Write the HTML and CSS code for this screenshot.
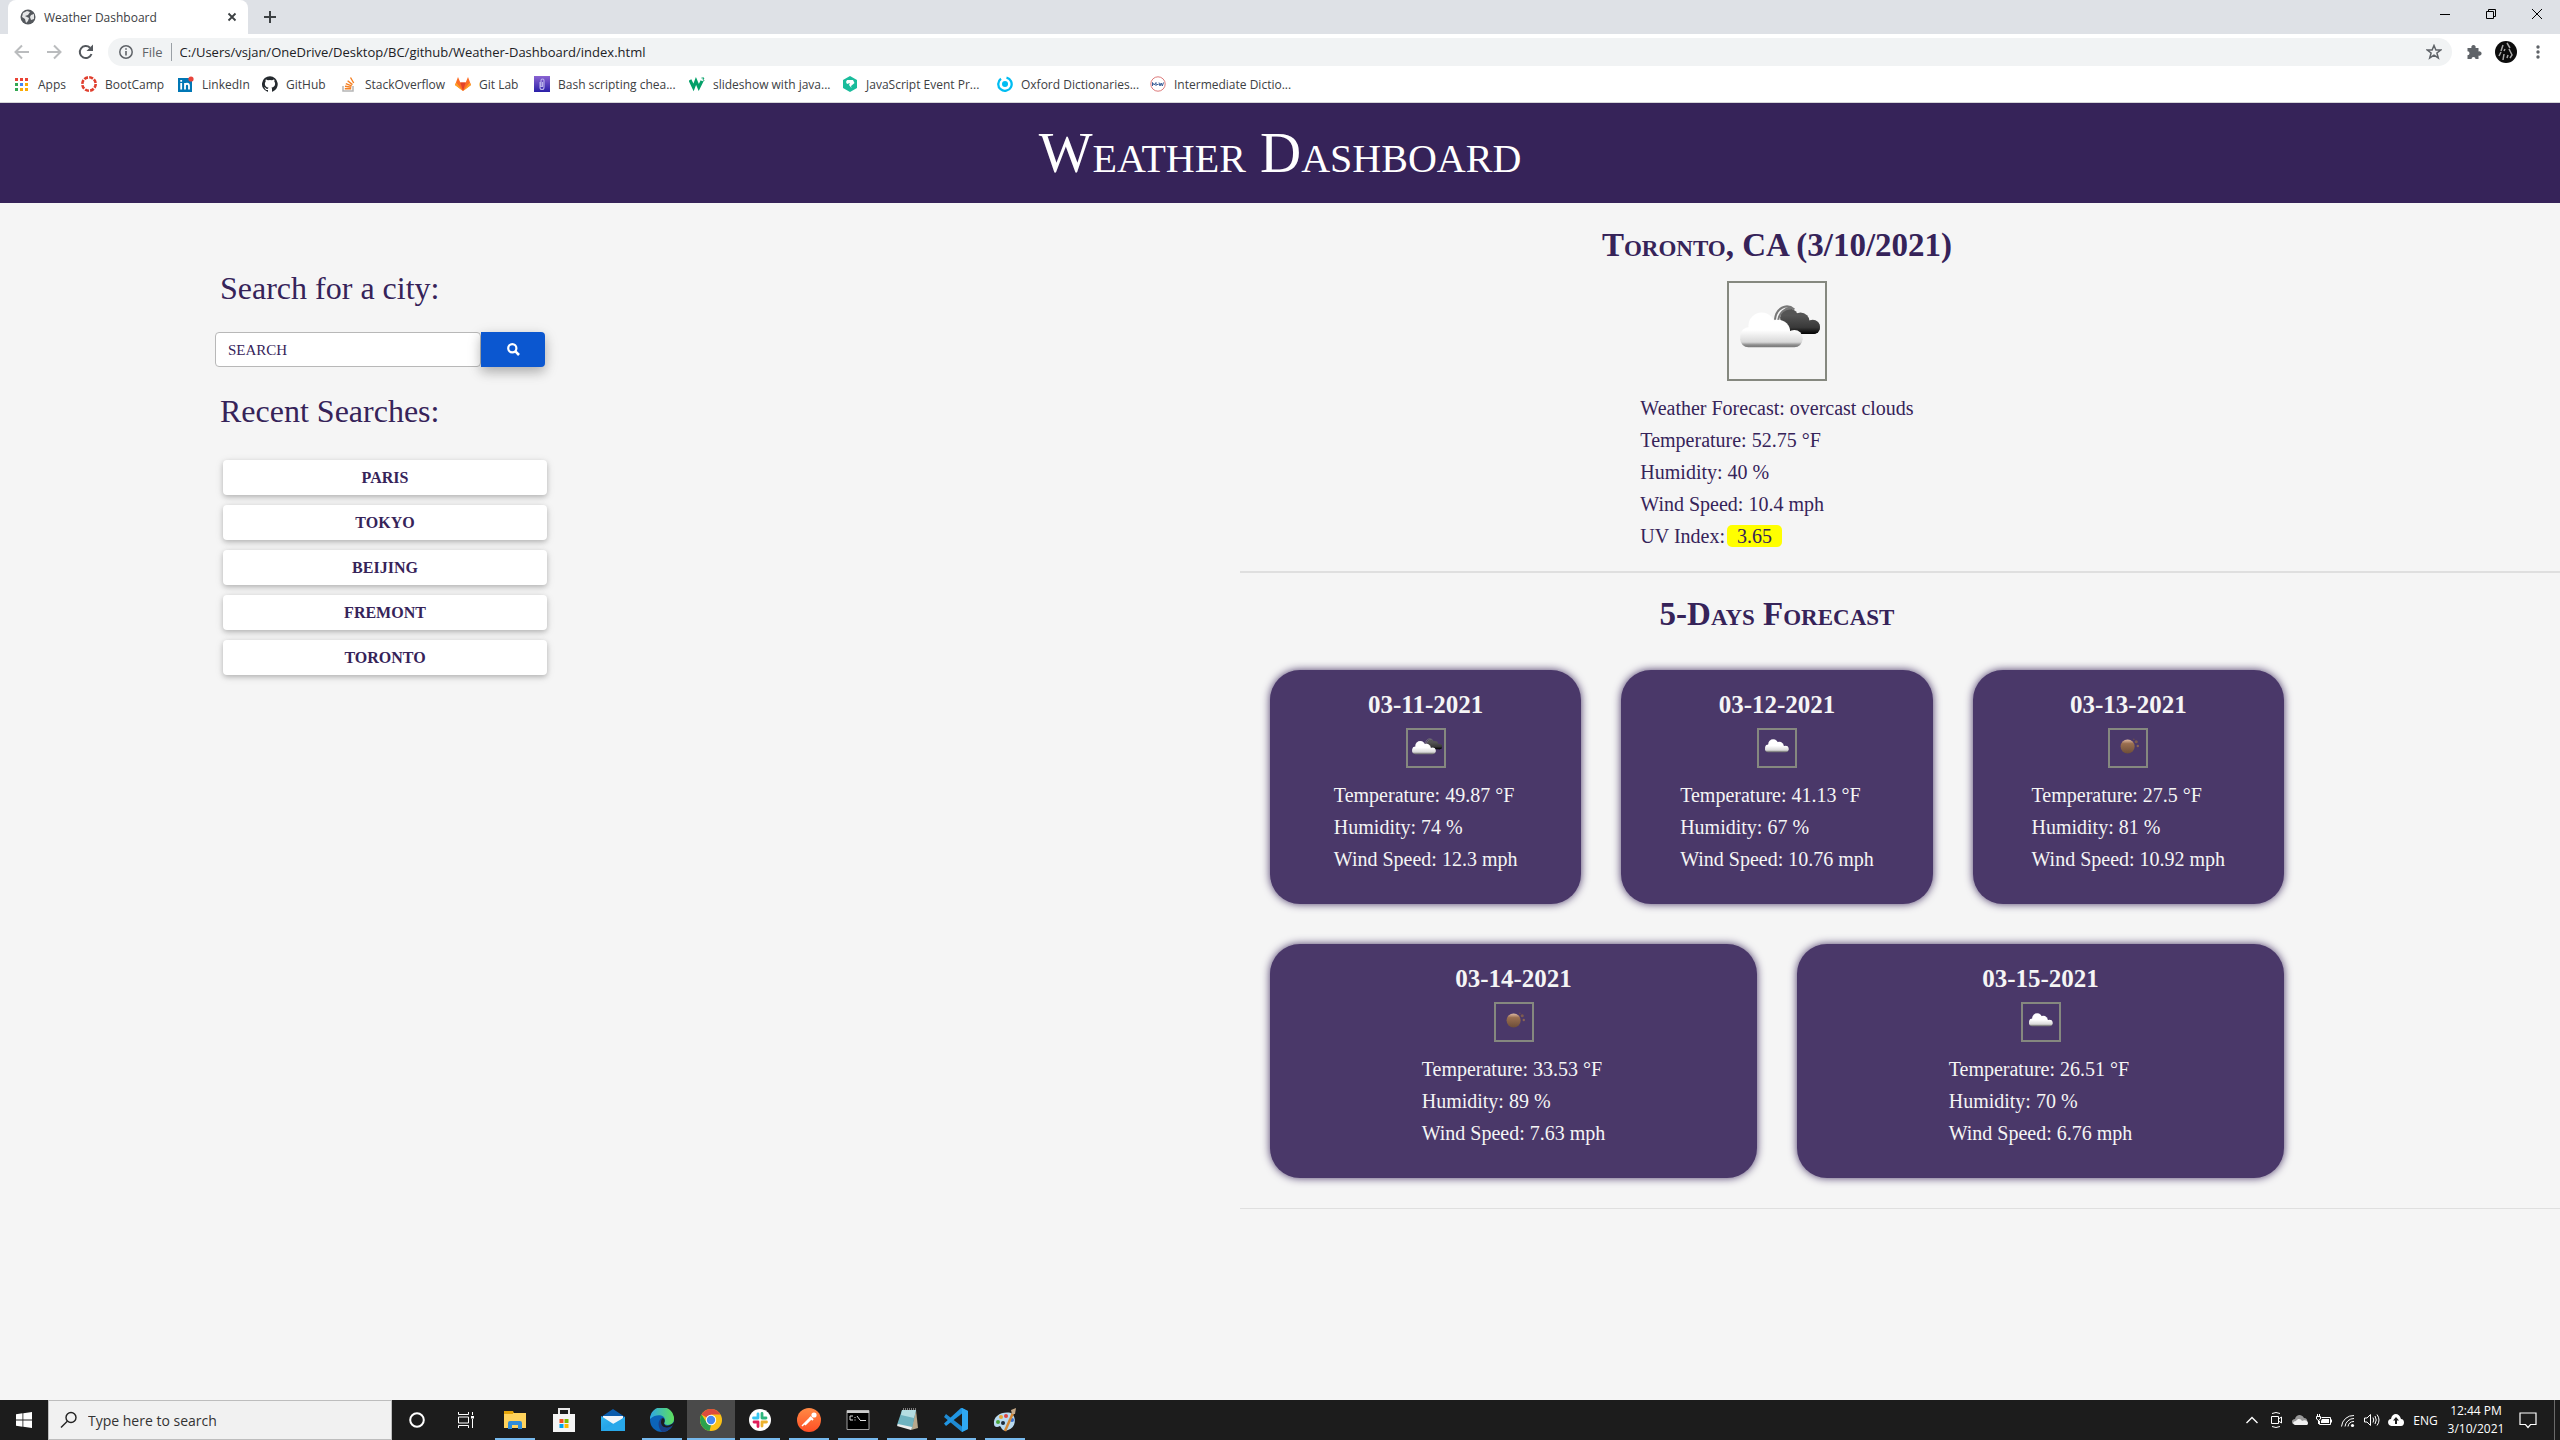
FILE: index.html
```html
<!DOCTYPE html>
<html lang="en">
<head>
<meta charset="utf-8">
<title>Weather Dashboard</title>
<link rel="stylesheet" href="styles.css">
</head>
<body>
<svg class="defs" aria-hidden="true">
  <defs>
    <linearGradient id="g-cloud" gradientUnits="userSpaceOnUse" x1="0" y1="32" x2="0" y2="66"><stop offset=".5" stop-color="#fff"/><stop offset=".85" stop-color="#d8d8d8"/><stop offset=".93" stop-color="#8c8c8c"/><stop offset="1" stop-color="#777"/></linearGradient>
    <linearGradient id="g-dark" gradientUnits="userSpaceOnUse" x1="0" y1="27" x2="0" y2="53"><stop offset=".3" stop-color="#555"/><stop offset=".75" stop-color="#383838"/><stop offset="1" stop-color="#000"/></linearGradient>
    <linearGradient id="g-sun" x1="0" y1="0" x2="0" y2="1"><stop offset="0" stop-color="#e2bda6"/><stop offset=".3" stop-color="#9a6f50"/><stop offset="1" stop-color="#6d4d38"/></linearGradient>
    <linearGradient id="g-edge" x1="0" y1="0" x2="1" y2="0"><stop offset="0" stop-color="#2ea8e6"/><stop offset="1" stop-color="#5fe05a"/></linearGradient>
    <linearGradient id="g-bash" x1="0" y1="0" x2="0" y2="1"><stop offset="0" stop-color="#8a63d2"/><stop offset="1" stop-color="#2a1fa8"/></linearGradient>
    <linearGradient id="g-mail" x1="0" y1="0" x2="1" y2="1"><stop offset="0" stop-color="#35b8f1"/><stop offset="1" stop-color="#1590df"/></linearGradient>
    <linearGradient id="g-post" x1="0" y1="0" x2="0" y2="1"><stop offset="0" stop-color="#ff8a45"/><stop offset="1" stop-color="#ff4f25"/></linearGradient>
    <g id="white-cloud" fill="url(#g-cloud)"><circle cx="35" cy="45" r="13"/><circle cx="23" cy="55" r="9"/><circle cx="51" cy="51" r="12"/><circle cx="67" cy="57" r="8"/><rect x="14" y="50" width="61" height="16" rx="8"/></g>
    <symbol id="w-broken" viewBox="3 3 94 94">
      <g fill="url(#g-dark)"><circle cx="62" cy="37" r="9"/><circle cx="73" cy="41" r="9"/><circle cx="85" cy="46" r="7"/><rect x="58" y="40" width="34" height="13" rx="6"/></g>
      <path d="M48 39C49 28 59 22 67 29M51 40C52 32 58 27 64 28" fill="none" stroke="#777" stroke-width="2"/>
      <use href="#white-cloud"/>
    </symbol>
    <symbol id="w-cloud" viewBox="3 3 94 94"><use href="#white-cloud" transform="translate(5 -5)"/></symbol>
    <symbol id="w-sun" viewBox="4 4 92 92">
      <circle cx="49" cy="46" r="18" fill="url(#g-sun)"/><circle cx="71" cy="34" r="4" fill="#7c5a50"/><circle cx="75" cy="45" r="3" fill="#8a6454"/><circle cx="65" cy="28" r="2" fill="#6b4d50"/>
    </symbol>
  </defs>
</svg>

<header class="browser">
  <div class="tabs">
    <div class="tab">
      <svg width="16" height="16" viewBox="0 0 16 16"><circle cx="8" cy="8" r="7.5" fill="#54585d"/><path d="M3 4L7 2L10 3L8 6L5 7L9 9L8 12L6 14L5 10L2 8ZM11 6L14 5L14 10L11 11L10 8Z" fill="#fff" opacity=".85"/></svg>
      <span class="tab-title">Weather Dashboard</span>
      <button class="icon-btn" aria-label="Close tab"><svg width="16" height="16" viewBox="0 0 16 16"><path d="M4.500 4.500L11.500 11.500M11.500 4.500L4.500 11.500" stroke="#3c4043" stroke-width="1.800"/></svg></button>
    </div>
    <button class="icon-btn new-tab" aria-label="New tab"><svg width="14" height="14" viewBox="0 0 14 14"><path d="M7 1V13M1 7H13" stroke="#3c4043" stroke-width="2"/></svg></button>
    <div class="window-buttons">
      <button class="icon-btn" aria-label="Minimize"><svg width="10" height="10" viewBox="0 0 10 10"><path d="M0 5.500H10" stroke="#000"/></svg></button>
      <button class="icon-btn" aria-label="Restore"><svg width="10" height="10" viewBox="0 0 10 10" fill="none" stroke="#000"><path d="M.5 2.500H7.500V9.500H.5ZM2.500 2.500V.5H9.500V7.500H7.500"/></svg></button>
      <button class="icon-btn" aria-label="Close"><svg width="10" height="10" viewBox="0 0 10 10"><path d="M0 0L10 10M10 0L0 10" stroke="#000"/></svg></button>
    </div>
  </div>
  <div class="toolbar">
    <button class="icon-btn nav" aria-label="Back"><svg width="16" height="16" viewBox="0 0 16 16" fill="none" stroke="#babcbe" stroke-width="2"><path d="M15 8H2M8 1.500L1.500 8L8 14.500"/></svg></button>
    <button class="icon-btn nav" aria-label="Forward"><svg width="16" height="16" viewBox="0 0 16 16" fill="none" stroke="#babcbe" stroke-width="2"><path d="M1 8H14M8 1.500L14.500 8L8 14.500"/></svg></button>
    <button class="icon-btn nav" aria-label="Reload"><svg width="16" height="16" viewBox="0 0 16 16"><path d="M13.500 10A6 6 0 1 1 12 3.700" fill="none" stroke="#54585d" stroke-width="2"/><path d="M15 .5V7H8.500Z" fill="#54585d"/></svg></button>
    <div class="omnibox">
      <svg width="14" height="14" viewBox="0 0 14 14"><circle cx="7" cy="7" r="6.200" fill="none" stroke="#5f6368" stroke-width="1.500"/><path d="M7 6V10.500M7 3.200V4.800" stroke="#5f6368" stroke-width="1.600"/></svg>
      <span class="scheme">File</span>
      <input class="url" aria-label="Address" value="C:/Users/vsjan/OneDrive/Desktop/BC/github/Weather-Dashboard/index.html">
      <svg width="16" height="16" viewBox="0 0 16 16"><path d="M8 1.500L9.900 6H14.700L10.900 9L12.300 14L8 11.200L3.700 14L5.100 9L1.300 6H6.100Z" fill="none" stroke="#5f6368" stroke-width="1.500"/></svg>
    </div>
    <button class="icon-btn tool" aria-label="Extensions"><svg width="16" height="16" viewBox="0 0 16 16"><path d="M1.500 4H5.500A2.200 2.200 0 1 1 9.500 4H12.500V7.500A2.200 2.200 0 1 1 12.500 11.500V15H9.500A2 2 0 1 0 5.500 15H1.500V11.300A2 2 0 1 0 1.500 7.300Z" fill="#5f6368"/></svg></button>
    <button class="icon-btn tool" aria-label="Profile"><svg width="22" height="22" viewBox="0 0 22 22"><circle cx="11" cy="11" r="11" fill="#0c0c0c"/><path d="M8 4L6 10M12 2L15 7M14 8L17 14L15 17M9 13L8 19M6 11L4 15M13 14L12 17M10 8L9 10" stroke="#a8a8a8" stroke-width="1.500"/></svg></button>
    <button class="icon-btn tool" aria-label="Menu"><svg width="4" height="14" viewBox="0 0 4 14" fill="#5f6368"><circle cx="2" cy="2" r="1.700"/><circle cx="2" cy="7" r="1.700"/><circle cx="2" cy="12" r="1.700"/></svg></button>
  </div>
  <nav class="bookmarks">
    <a href="#"><svg width="16" height="16" viewBox="0 0 16 16"><path d="M1 2H4V5H1ZM6 2H9V5H6ZM11 2H14V5H11Z" fill="#ea4335"/><path d="M1 7H4V10H1ZM1 12H4V15H1Z" fill="#34a853"/><path d="M6 7H9V10H6Z" fill="#4285f4"/><path d="M11 7H14V10H11ZM6 12H9V15H6ZM11 12H14V15H11Z" fill="#fbab05"/></svg>Apps</a>
    <a href="#"><svg width="16" height="16" viewBox="0 0 16 16"><circle cx="8" cy="8" r="6.700" fill="none" stroke="#e03e2d" stroke-width="2.600" stroke-dasharray="4 1.262"/></svg>BootCamp</a>
    <a href="#"><svg width="16" height="16" viewBox="0 0 16 16"><path d="M0 2H14V16H0Z" fill="#0077b5"/><path d="M3.200 7V13.500M7 13.500V7M7 10C7 7 11 7 11 10V13.500M3.200 4V5.700" stroke="#fff" stroke-width="1.800" fill="none"/><circle cx="13" cy="3" r="2.600" fill="#e8453c"/></svg>LinkedIn</a>
    <a href="#"><svg width="16" height="16" viewBox="0 0 16 16"><path d="M8 .2a8 8 0 0 0-2.500 15.600c.4 0 .5-.2.5-.4v-1.500c-2.200.5-2.700-1-2.700-1-.4-.9-.9-1.200-.9-1.200-.7-.5.1-.5.100-.5.800.1 1.200.8 1.200.8.700 1.200 1.900.9 2.300.7.100-.5.300-.9.500-1.100-1.800-.2-3.600-.9-3.600-4 0-.9.300-1.600.8-2.100-.1-.2-.4-1 .1-2.100 0 0 .7-.2 2.200.8a7.500 7.500 0 0 1 4 0c1.500-1 2.200-.8 2.200-.8.500 1.100.2 1.900.1 2.100.5.500.8 1.200.8 2.100 0 3.100-1.900 3.800-3.700 4 .3.300.6.800.6 1.500v2.200c0 .2.100.5.500.4A8 8 0 0 0 8 .2Z" fill="#24292e"/></svg>GitHub</a>
    <a href="#"><svg width="16" height="16" viewBox="0 0 16 16" fill="none"><path d="M2 10V15H12V10" stroke="#b5b5b5" stroke-width="1.500"/><path d="M3.800 12.700H10.200M4 10.300L10.300 11.200M4.800 7.600L10.700 9.900M6.600 4.700L11.500 8.600M9.500 1.500L12.700 7" stroke="#f48024" stroke-width="1.400"/></svg>StackOverflow</a>
    <a href="#"><svg width="16" height="16" viewBox="0 0 16 16"><path d="M8 15L0 9L3 1L5.300 6.500H10.700L13 1L16 9Z" fill="#fc6d26"/><path d="M8 15L5.300 6.500H10.700Z" fill="#e24329"/><path d="M0 9L1.200 6.500L8 15ZM16 9L14.800 6.500L8 15Z" fill="#fca326"/></svg>Git Lab</a>
    <a href="#"><svg width="16" height="16" viewBox="0 0 16 16"><path d="M0 0H16V16H0Z" fill="url(#g-bash)"/><path d="M6 6V11.500A2 2 0 0 0 10 11.500V4.500A1.500 1.500 0 0 0 7 4.500V10.500H8.500V6" fill="none" stroke="#b9b2ea" stroke-width="1.100"/></svg>Bash scripting chea...</a>
    <a href="#"><svg width="16" height="16" viewBox="0 0 16 16" fill="none" stroke="#04a069"><path d="M1 4L4.500 11.500L7 5L9.800 11.500L13 5" stroke-width="3"/><path d="M12.500 2H15L14 3.500C15.500 3.800 15 6 13 5.300"/></svg>slideshow with java...</a>
    <a href="#"><svg width="16" height="16" viewBox="0 0 16 16"><path d="M8 0L15 4V12L8 16L1 12V4Z" fill="#1abc9c"/><path d="M5 4H11L12.500 7L9 10L9.500 12L7 9L8 7L5 8L4 6Z" fill="#fff"/></svg>JavaScript Event Pr...</a>
    <a href="#"><svg width="16" height="16" viewBox="0 0 16 16"><path d="M9.500 1.600A6.700 6.700 0 1 1 4 2.700" fill="none" stroke="#00bdf2" stroke-width="2.300"/><circle cx="8" cy="8" r="3" fill="#00bdf2"/></svg>Oxford Dictionaries...</a>
    <a href="#"><svg width="16" height="16" viewBox="0 0 16 16" fill="none"><circle cx="8" cy="8" r="7.200" stroke="#dd7b7b"/><path d="M2.500 10V6.500L4.200 9L6 6.500V10M6.500 8.500H8.500M9 6.500L10 10L11.200 7L12.300 10L13.500 6.500" stroke="#375c96"/></svg>Intermediate Dictio...</a>
  </nav>
</header>

<div class="page">
  <header class="banner"><h1>Weather Dashboard</h1></header>
  <main class="columns">
    <aside class="search">
      <h2 id="search-title">Search for a city:</h2>
      <form class="search-form">
        <input class="city" type="text" placeholder="SEARCH" aria-labelledby="search-title">
        <button class="go" type="button" aria-label="Search"><svg width="13" height="13" viewBox="0 0 13 13" fill="none" stroke="#fff"><circle cx="5.300" cy="5.300" r="4.100" stroke-width="2.200"/><path d="M8.200 8.200L12 12" stroke-width="2.600"/></svg></button>
      </form>
      <h2>Recent Searches:</h2>
      <div class="recent">
        <button type="button">PARIS</button>
        <button type="button">TOKYO</button>
        <button type="button">BEIJING</button>
        <button type="button">FREMONT</button>
        <button type="button">TORONTO</button>
      </div>
    </aside>
    <div class="results">
      <section class="current">
        <h2>Toronto, CA (3/10/2021)</h2>
        <svg class="weather-icon large"><use href="#w-broken"/></svg>
        <div class="readings">
          <p>Weather Forecast: overcast clouds</p>
          <p>Temperature: 52.75 °F</p>
          <p>Humidity: 40 %</p>
          <p>Wind Speed: 10.4 mph</p>
          <p class="uv-row">UV Index: <span class="uv">3.65</span></p>
        </div>
      </section>
      <hr>
      <section class="forecast">
        <h2>5-Days Forecast</h2>
        <div class="cards">
          <article class="card"><h3>03-11-2021</h3><svg class="weather-icon"><use href="#w-broken"/></svg><div class="readings"><p>Temperature: 49.87 °F</p><p>Humidity: 74 %</p><p>Wind Speed: 12.3 mph</p></div></article>
          <article class="card"><h3>03-12-2021</h3><svg class="weather-icon"><use href="#w-cloud"/></svg><div class="readings"><p>Temperature: 41.13 °F</p><p>Humidity: 67 %</p><p>Wind Speed: 10.76 mph</p></div></article>
          <article class="card"><h3>03-13-2021</h3><svg class="weather-icon"><use href="#w-sun"/></svg><div class="readings"><p>Temperature: 27.5 °F</p><p>Humidity: 81 %</p><p>Wind Speed: 10.92 mph</p></div></article>
          <article class="card"><h3>03-14-2021</h3><svg class="weather-icon"><use href="#w-sun"/></svg><div class="readings"><p>Temperature: 33.53 °F</p><p>Humidity: 89 %</p><p>Wind Speed: 7.63 mph</p></div></article>
          <article class="card"><h3>03-15-2021</h3><svg class="weather-icon"><use href="#w-cloud"/></svg><div class="readings"><p>Temperature: 26.51 °F</p><p>Humidity: 70 %</p><p>Wind Speed: 6.76 mph</p></div></article>
        </div>
      </section>
      <hr class="thin">
    </div>
  </main>
</div>

<footer class="taskbar">
  <button class="icon-btn start" aria-label="Start"><svg width="16" height="16" viewBox="0 0 16 16" fill="#fff"><path d="M0 2.200L6.500 1.300V7.600H0ZM7.300 1.200L16 0V7.600H7.300ZM0 8.400H6.500V14.700L0 13.800ZM7.300 8.400H16V16L7.300 14.800Z"/></svg></button>
  <label class="task-search">
    <svg width="18" height="18" viewBox="0 0 18 18" fill="none" stroke="#222" stroke-width="1.400"><circle cx="11" cy="6.500" r="5"/><path d="M7.300 10.200L1 16.500"/></svg>
    <input type="text" placeholder="Type here to search" aria-label="Type here to search">
  </label>
  <div class="apps">
    <button class="icon-btn" aria-label="Cortana"><svg width="16" height="16" viewBox="0 0 16 16"><circle cx="8" cy="8" r="6.800" fill="none" stroke="#fff" stroke-width="2"/></svg></button>
    <button class="icon-btn" aria-label="Task View"><svg width="16" height="16" viewBox="0 0 16 16" fill="none" stroke="#fff"><path d="M.5 0V2.500H10.500V0M.5 16V13.500H10.500V16M.5 5H10.500V11H.5ZM14.500 0V3M14.500 7V16"/><path d="M13 4H16V6.500H13Z" fill="#fff" stroke="none"/></svg></button>
    <button class="icon-btn open" aria-label="File Explorer"><svg width="24" height="24" viewBox="0 0 24 24"><path d="M1 3H10L11 5H1Z" fill="#e2a100"/><path d="M1 5H23V20H1Z" fill="#ffd35c"/><path d="M1 3H10V6H1Z" fill="#e5a50a"/><path d="M5 21V15A2 2 0 0 1 7 13H17A2 2 0 0 1 19 15V21H15V17H9V21Z" fill="#2f8cd8"/></svg></button>
    <button class="icon-btn" aria-label="Microsoft Store"><svg width="24" height="24" viewBox="0 0 24 24"><path d="M7 7V1H17V7" fill="none" stroke="#e8e8e8" stroke-width="2"/><path d="M1 6H23V24H1Z" fill="#f5f5f5"/><path d="M7.500 11H11.500V15H7.500Z" fill="#f25022"/><path d="M12.500 11H16.500V15H12.500Z" fill="#7fba00"/><path d="M7.500 16H11.500V20H7.500Z" fill="#00a4ef"/><path d="M12.500 16H16.500V20H12.500Z" fill="#ffb900"/></svg></button>
    <button class="icon-btn" aria-label="Mail"><svg width="24" height="24" viewBox="0 0 24 24"><path d="M0 9L12 1L24 9V23H0Z" fill="#0a5cad"/><path d="M2 8H22V17H2Z" fill="#f2f6fa"/><path d="M0 8L14 17L24 8.500V23H0Z" fill="url(#g-mail)"/><path d="M0 23L24 9V23Z" fill="#28a8ea"/></svg></button>
    <button class="icon-btn open" aria-label="Edge"><svg width="24" height="24" viewBox="0 0 24 24"><circle cx="12" cy="12" r="12" fill="#0c64b8"/><path d="M0 11A12 12 0 0 1 24 11C24 18 15 18 14 15C18 8 8 4 0 11Z" fill="url(#g-edge)"/><path d="M14 15.500C15 19 20 19 23 16.500C21 21 16 24 12 24C8 20 7 13 12 9.500C15 10 14.500 13 14 15.500Z" fill="#1b3f86"/><path d="M14 15.500C15 19 20 18.500 24 14L23.500 17C18 21 11 20 11 14C11 11 13 10 13 10C15 11 15 13 14 15.500Z" fill="#1c1c1c"/></svg></button>
    <button class="icon-btn open active" aria-label="Chrome"><svg width="24" height="24" viewBox="0 0 24 24"><circle cx="12" cy="12" r="11" fill="#fbc116"/><path d="M12 12L2.500 6.500A11 11 0 0 1 21.500 6.500H12Z" fill="#dd4b3e"/><path d="M2.500 6.500L8 15L12 17L10.500 22.900A11 11 0 0 1 2.500 6.500Z" fill="#2ba24c"/><circle cx="12" cy="12" r="5.200" fill="#fff"/><circle cx="12" cy="12" r="4.200" fill="#4688f1"/></svg></button>
    <button class="icon-btn open" aria-label="Slack"><svg width="24" height="24" viewBox="0 0 24 24" fill="none" stroke-width="2.800" stroke-linecap="round"><circle cx="12" cy="12" r="11" fill="#fff"/><path d="M10 6V10M5.500 10H10" stroke="#36c5f0"/><path d="M14 5.500V10M14 10H18" stroke="#2eb67d"/><path d="M14 14H18.500M14 14V18" stroke="#ecb22e"/><path d="M6 14H10M10 14V18.500" stroke="#e01e5a"/></svg></button>
    <button class="icon-btn open" aria-label="Postman"><svg width="24" height="24" viewBox="0 0 24 24"><circle cx="12" cy="12" r="12" fill="url(#g-post)"/><path d="M5 18L14 9M8 17L15 10" stroke="#fff" stroke-width="1.500"/><path d="M13 9L16 12" stroke="#fff" stroke-width="2"/><circle cx="17" cy="7" r="2.600" fill="#fff"/></svg></button>
    <button class="icon-btn open" aria-label="Command Prompt"><svg width="24" height="24" viewBox="0 0 24 24"><path d="M1 2.500H23V21.500H1Z" fill="#000" stroke="#a0a0a0"/><path d="M1 2.500H23V5H1Z" fill="#ccc"/><path d="M7 8H4V12H7M9 9V10M9 11.500V12.500M11 8L14 12M14 12.500H20" stroke="#ddd" fill="none"/></svg></button>
    <button class="icon-btn open" aria-label="Notepad"><svg width="24" height="24" viewBox="0 0 24 24"><path d="M21 2L23 20L16 22Z" fill="#b8a88c"/><path d="M7 2L21 2L17 21L2 17Z" fill="#6fb3c0"/><path d="M7 2H21L19 10L6 7Z" fill="#b5dde2"/><path d="M3 16L17 19L16 22L2 18Z" fill="#eee"/><path d="M8 1H21" stroke="#ddd" stroke-dasharray="1 1"/></svg></button>
    <button class="icon-btn open" aria-label="Visual Studio Code"><svg width="24" height="24" viewBox="0 0 24 24"><path d="M18 0L24 3V21L18 24L0 9L2 6L18 18.500Z" fill="#1f8ad2"/><path d="M18 0V5.500L2 18L0 15.500L17 0Z" fill="#2196e3"/><path d="M18 0L24 3V21L18 24Z" fill="#2fa8f2"/></svg></button>
    <button class="icon-btn open" aria-label="Paint"><svg width="24" height="24" viewBox="0 0 24 24"><path d="M1 16C0 8 9 3 18 5C24 9 23 20 15 22C9 24 9 20 7 18C4 20 1 19 1 16Z" fill="#b9daf0"/><circle cx="5" cy="14" r="2" fill="#4aa63c"/><circle cx="8" cy="9" r="2" fill="#e5a534"/><circle cx="13" cy="8" r="2" fill="#d44"/><circle cx="10" cy="15" r="2" fill="#1c2a3a"/><circle cx="19" cy="12" r="2" fill="#386fd0"/><path d="M12 23L20 5" stroke="#d48836" stroke-width="2.500"/><path d="M18 2L23 0L22 6L19 6Z" fill="#c4a887"/></svg></button>
  </div>
  <div class="tray">
    <button class="icon-btn" aria-label="Show hidden icons"><svg width="14" height="14" viewBox="0 0 14 14" fill="none" stroke="#fff" stroke-width="1.400"><path d="M1.500 10L7 4.500L12.500 10"/></svg></button>
    <button class="icon-btn" aria-label="Meet Now"><svg width="16" height="16" viewBox="0 0 16 16" fill="none" stroke="#fff"><path d="M3.500 4.500H10.500V11.500H3.500ZM10.500 7L13.500 5V11L10.500 9M4 1.500Q8 -.5 12 1.500M4 14.500Q8 16.500 12 14.500"/></svg></button>
    <button class="icon-btn" aria-label="OneDrive"><svg width="16" height="16" viewBox="0 0 16 16"><path d="M1 12C-1 10 0 7 3 7C4 3 9 1 12 6C15 6 16 9 15 11L9 9Z" fill="#999"/><path d="M3 13C0 12 1 9 4 9C6 6 9 7 10 9C13 7 16 9 16 11S15 13 14 13Z" fill="#f2f2f2"/></svg></button>
    <button class="icon-btn" aria-label="Battery"><svg width="16" height="16" viewBox="0 0 16 16" fill="none" stroke="#fff"><path d="M5.500 5.500H14.500V12.500H3.500V9M15.500 7.500V10.500M1.500 2V4M3.500 2V4M.5 4.500H4.500V7L2.500 8.500L.5 7ZM2.500 8V12"/><path d="M6 7H13V11H5V9Z" fill="#fff" stroke="none"/></svg></button>
    <button class="icon-btn" aria-label="Wi-Fi"><svg width="16" height="16" viewBox="0 0 16 16" fill="none" stroke="#fff"><path d="M1.500 14.500A12 12 0 0 1 14 3.500M5 14.500A9 9 0 0 1 14 6.500M8 14.500A6 6 0 0 1 14 9.500"/><circle cx="12.500" cy="13.500" r="1.600" fill="#fff" stroke="none"/></svg></button>
    <button class="icon-btn" aria-label="Volume"><svg width="16" height="16" viewBox="0 0 16 16" fill="none" stroke="#fff"><path d="M.5 6H3L6.500 2.500V13.500L3 10H.5ZM9 5.500Q10.500 8 9 10.500M11 4Q13.500 8 11 12M13 2.500Q17 8 13 13.500"/></svg></button>
    <button class="icon-btn" aria-label="Cloud backup"><svg width="16" height="16" viewBox="0 0 16 16"><path d="M3.500 14C-1 14-1 7 3 7C4 1 11 0 13 7C17 7 17 14 13 14Z" fill="#fff"/><path d="M8 5L11 8.500H9V12H7V8.500H5Z" fill="#1c1c1c"/></svg></button>
    <button class="icon-btn lang">ENG</button>
    <button class="icon-btn clock"><time>12:44 PM</time><time>3/10/2021</time></button>
    <button class="icon-btn notes" aria-label="Notifications"><svg width="18" height="18" viewBox="0 0 18 18" fill="none" stroke="#fff" stroke-width="1.200"><path d="M1 2H17V13.500H11.500L9 16.500L6.500 13.500H1Z"/></svg></button>
  </div>
</footer>
</body>
</html>
```
FILE: styles.css
```css
* { box-sizing: border-box; }

body {
  margin: 0;
  min-height: 100vh;
  display: flex;
  flex-direction: column;
  background: #f5f5f5;
  color: #362359;
  font-family: "Liberation Serif", "Times New Roman", serif;
}

h1, h2, h3, p { margin: 0; }
svg { display: block; flex: none; }
button, input { font: inherit; color: inherit; }
.defs { position: absolute; width: 0; height: 0; }

.icon-btn {
  display: flex;
  align-items: center;
  justify-content: center;
  padding: 0;
  border: 0;
  background: none;
}

/* Browser window */
.browser {
  background: #fff;
  border-bottom: 1px solid #d5d5d8;
  color: #3c4043;
  font-family: "Open Sans", sans-serif;
  font-size: 12px;
}
.tabs { display: flex; height: 34px; padding-left: 8px; background: #dee1e6; }
.tab {
  display: flex;
  align-items: center;
  gap: 8px;
  width: 240px;
  padding: 0 8px 0 12px;
  border-radius: 8px 8px 0 0;
  background: #fff;
}
.tab-title { flex: 1; }
.new-tab { width: 44px; }
.window-buttons { display: flex; margin-left: auto; height: 28px; }
.window-buttons button { width: 46px; }

.toolbar { display: flex; align-items: center; height: 36px; padding: 0 6px; }
.nav { width: 32px; }
.omnibox {
  display: flex;
  flex: 1;
  align-items: center;
  height: 28px;
  margin: 0 6px;
  padding: 0 10px 0 11px;
  border-radius: 14px;
  background: #f1f3f4;
  font-size: 13px;
}
.scheme { margin-left: 9px; padding-right: 8px; border-right: 1px solid #9aa0a6; color: #5f6368; }
.url { flex: 1; min-width: 0; padding: 0 8px; border: 0; background: none; color: #202124; }
.tool { width: 32px; }

.bookmarks {
  display: grid;
  grid-template-columns: 67px 97px 84px 79px 114px 79px 155px 153px 155px 153px auto;
  justify-content: start;
  align-items: center;
  height: 32px;
  padding: 0 14px 4px;
}
.bookmarks a {
  display: flex;
  align-items: center;
  gap: 8px;
  color: inherit;
  text-decoration: none;
  white-space: nowrap;
}

/* Dashboard */
.page { flex: 1; }
.banner { padding: 19px 0; background: #362359; color: #fff; text-align: center; }
h1 { font-size: 57px; font-weight: 400; line-height: 62px; font-variant: small-caps; }
h2 { font-size: 32px; line-height: 38px; }
.columns { display: grid; grid-template-columns: 31fr 33fr; }

.search { padding: 66px 20px 0 215px; }
.search h2 { padding-left: 5px; font-weight: 400; }
.search-form { display: flex; width: 330px; margin: 25px 0; }
.city {
  flex: 1;
  min-width: 0;
  height: 35px;
  padding: 2px 12px 0;
  border: 1px solid #b8b8b8;
  border-radius: 4px;
  background: #fff;
  font-size: 15px;
}
.city::placeholder { color: #362359; opacity: 1; }
.go {
  display: flex;
  align-items: center;
  justify-content: center;
  width: 64px;
  border: 0;
  border-radius: 0 4px 4px 0;
  background: #0b57d0;
  box-shadow: 0 5px 11px rgba(0, 0, 0, .18), 0 4px 15px rgba(0, 0, 0, .15);
}
.recent { display: grid; gap: 10px; width: 324px; margin: 30px 0 0 8px; }
.recent button {
  height: 35px;
  padding: 0;
  border: 0;
  border-radius: 4px;
  background: #fff;
  box-shadow: 0 2px 5px rgba(0, 0, 0, .2), 0 2px 10px rgba(0, 0, 0, .1);
  font-size: 16px;
  font-weight: 700;
}

.current, .forecast {
  display: flex;
  flex-direction: column;
  align-items: center;
  max-width: 1074px;
  padding: 0 30px;
}
.current { padding-top: 23px; }
.results h2 { font-size: 33px; font-variant: small-caps; }
.weather-icon { width: 40px; height: 40px; border: 2px solid #85887f; }
.large { width: 100px; height: 100px; margin-top: 17px; }
.readings { margin-top: 11px; font-size: 20px; line-height: 32px; }
.uv-row { display: flex; align-items: center; gap: 2px; }
.uv { padding: 0 10px; border-radius: 5px; background: #ff0; line-height: 22px; }
hr { height: 2px; margin: 19px 0 22px; border: 0; background: #dfdfdf; }
hr.thin { height: 1px; margin: 30px 0 0; }

.cards { display: flex; flex-wrap: wrap; gap: 40px; width: 100%; margin-top: 37px; }
.card {
  display: flex;
  flex: 1 1 300px;
  flex-direction: column;
  align-items: center;
  padding: 20px 20px 29px;
  border-radius: 30px;
  background: #4a3869;
  box-shadow: 0 0 8px #4a3869;
  color: #f5f5f5;
}
.card h3 { margin-bottom: 8px; font-size: 25px; line-height: 30px; }

/* Taskbar */
.taskbar {
  display: flex;
  height: 40px;
  background: #1c1c1c;
  color: #fff;
  font-family: "Open Sans", sans-serif;
  font-size: 12px;
}
.start { width: 48px; }
.task-search {
  display: flex;
  align-items: center;
  gap: 10px;
  width: 344px;
  padding: 0 11px;
  border: 1px solid #bdbdbd;
  background: #f1f1f1;
}
.task-search input { flex: 1; min-width: 0; padding: 0; border: 0; background: none; font-size: 14px; }
.task-search input::placeholder { color: #333; opacity: 1; }
.apps { display: flex; gap: 1px; padding-left: 1px; }
.apps button { position: relative; width: 48px; }
.open::after {
  content: "";
  position: absolute;
  right: 4px;
  bottom: 0;
  left: 4px;
  height: 2px;
  background: #76b9ed;
}
.apps .active { background: #4a4a4a; }
.active::after { right: 0; left: 0; }
.tray { display: flex; margin-left: auto; padding-right: 5px; }
.tray button { width: 24px; }
.tray .lang { width: 35px; }
.tray .clock { flex-direction: column; width: 66px; line-height: 18px; }
.tray .notes { width: 46px; padding-right: 8px; border-right: 1px solid #6a6a6a; }
```
